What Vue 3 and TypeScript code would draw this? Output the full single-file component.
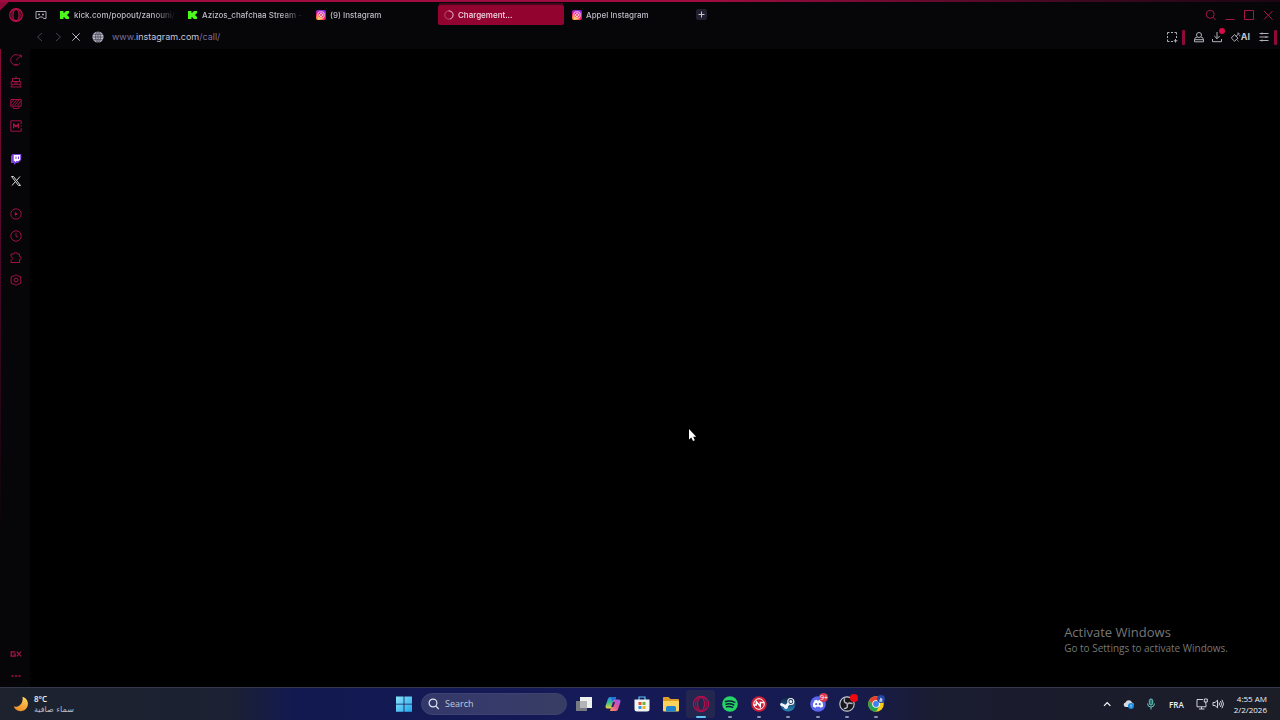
<script setup lang="ts">
import { nextTick, ref } from 'vue'

interface Tab {
  id: number
  title: string
  icon: 'kick' | 'instagram' | 'spinner'
}

const tabs: Tab[] = [
  { id: 1, title: 'kick.com/popout/zanouni/', icon: 'kick' },
  { id: 2, title: 'Azizos_chafchaa Stream -', icon: 'kick' },
  { id: 3, title: '(9) Instagram', icon: 'instagram' },
  { id: 4, title: 'Chargement...', icon: 'spinner' },
  { id: 5, title: 'Appel Instagram', icon: 'instagram' },
]
const activeTab = ref(4)

const host = ref('instagram.com')
const path = ref('/call/')
const editing = ref(false)
const addressInput = ref<HTMLInputElement | null>(null)
const query = ref('')

async function editAddress() {
  editing.value = true
  await nextTick()
  addressInput.value?.focus()
}
</script>

<template>
  <div class="desktop">
    <svg class="defs" aria-hidden="true">
      <defs>
        <radialGradient id="insta" cx="0.25" cy="1" r="1.1">
          <stop offset="0" stop-color="#ffd34e" />
          <stop offset="0.35" stop-color="#ff5a2c" />
          <stop offset="0.6" stop-color="#ec0f8c" />
          <stop offset="1" stop-color="#7a2cf0" />
        </radialGradient>
        <linearGradient id="winlogo" x1="0" y1="0" x2="1" y2="1">
          <stop offset="0" stop-color="#8be4fb" />
          <stop offset="1" stop-color="#22a7ec" />
        </linearGradient>
        <linearGradient id="moon" x1="0.7" y1="0" x2="0.3" y2="1">
          <stop offset="0" stop-color="#ffd55a" />
          <stop offset="1" stop-color="#f08a24" />
        </linearGradient>
        <linearGradient id="copilotA" x1="0" y1="0" x2="0" y2="1">
          <stop offset="0" stop-color="#2a8af0" />
          <stop offset="0.5" stop-color="#35c48a" />
          <stop offset="1" stop-color="#f2d13c" />
        </linearGradient>
        <linearGradient id="copilotB" x1="1" y1="0" x2="0" y2="1">
          <stop offset="0" stop-color="#8a5cf5" />
          <stop offset="0.5" stop-color="#e0559c" />
          <stop offset="1" stop-color="#ff9a55" />
        </linearGradient>
        <linearGradient id="steam" x1="0" y1="0" x2="0" y2="1">
          <stop offset="0" stop-color="#101a3c" />
          <stop offset="1" stop-color="#2a87b8" />
        </linearGradient>
      </defs>
    </svg>

    <div class="browser">
      <header class="chrome">
        <div class="tabrow">
          <button class="opera" aria-label="Menu">
            <svg viewBox="0 0 16 16" width="16" height="16" fill="none" stroke="#c4104a">
              <circle cx="8" cy="8" r="6.3" stroke-width="1.2" />
              <ellipse cx="8" cy="8" rx="3.1" ry="5.6" stroke-width="1.1" />
              <path d="M5.6 2.4C3 5 3 11 5.6 13.6M10.4 2.4C13 5 13 11 10.4 13.6" stroke-width=".7" />
            </svg>
          </button>
          <button class="corner" aria-label="GX Corner">
            <svg viewBox="0 0 12 12" width="12" height="12" fill="none" stroke="#a9a9b4">
              <path d="M1 2.500h10v7H8.500L7.500 8h-3L3.500 9.500H1z" />
              <path d="M3 5.500h2M7 5.500h2" stroke-width="1.400" />
            </svg>
          </button>
          <nav class="tabs" role="tablist" aria-label="Tabs">
            <button
              v-for="tab in tabs"
              :key="tab.id"
              class="tab"
              :class="{ active: tab.id === activeTab }"
              role="tab"
              :aria-selected="tab.id === activeTab"
              @click="activeTab = tab.id"
            >
              <svg v-if="tab.icon === 'kick'" viewBox="0 0 10 10" width="10" height="10">
                <path fill="#4dfb1a" d="M0 1h3.500v2h1V2h1V1H9v2.500H8v1H7v1h1v1h1V9H5.500V8h-1V7h-1v2H0z" />
              </svg>
              <svg v-else-if="tab.icon === 'instagram'" viewBox="0 0 10 10" width="10" height="10">
                <rect width="10" height="10" rx="2" fill="url(#insta)" />
                <g fill="none" stroke="#fff" stroke-width=".8">
                  <rect x="1.900" y="1.900" width="6.200" height="6.200" rx="1.800" />
                  <circle cx="5" cy="5" r="1.500" />
                </g>
                <circle cx="6.900" cy="3.200" r=".4" fill="#fff" />
              </svg>
              <svg v-else viewBox="0 0 10 10" width="10" height="10" fill="none">
                <circle cx="5" cy="5" r="4.200" stroke="#b84a6d" />
                <path d="M5 .8a4.200 4.200 0 0 1 1.500 8.100" stroke="#dba0b4" stroke-linecap="round" />
              </svg>
              <span class="title">{{ tab.title }}</span>
            </button>
          </nav>
          <button class="newtab" aria-label="New tab">
            <svg viewBox="0 0 11 11" width="11" height="11">
              <rect width="11" height="11" rx="2" fill="#211f30" />
              <path d="M5.500 2.500v6M2.500 5.500h6" stroke="#c6c6d0" />
            </svg>
          </button>
          <div class="window">
            <button aria-label="Search tabs">
              <svg viewBox="0 0 12 12" width="12" height="12"><circle cx="5.200" cy="5.300" r="4" /><path d="M8 8.200l2.500 2.700" /></svg>
            </button>
            <button aria-label="Minimize">
              <svg viewBox="0 0 12 12" width="12" height="12"><path d="M1.500 10.500h9" /></svg>
            </button>
            <button aria-label="Maximize">
              <svg viewBox="0 0 12 12" width="12" height="12"><path d="M1.500 1.500h9v9h-9z" /></svg>
            </button>
            <button aria-label="Close">
              <svg viewBox="0 0 12 12" width="12" height="12"><path d="M2 2l8.500 8.500M10.500 2L2 10.500" /></svg>
            </button>
          </div>
        </div>

        <div class="toolbar">
          <button class="nav dim" aria-label="Back">
            <svg viewBox="0 0 10 10" width="10" height="10"><path d="M7 1L2.500 5 7 9" /></svg>
          </button>
          <button class="nav dim" aria-label="Forward">
            <svg viewBox="0 0 10 10" width="10" height="10"><path d="M3 1l4.500 4L3 9" /></svg>
          </button>
          <button class="nav" aria-label="Stop">
            <svg viewBox="0 0 10 10" width="10" height="10"><path d="M1.300 1.300l7.400 7.400M8.700 1.300L1.300 8.700" /></svg>
          </button>
          <button class="globe" aria-label="Site information">
            <svg viewBox="0 0 12 12" width="12" height="12">
              <circle cx="6" cy="6" r="5.600" fill="#b9b9ca" />
              <g fill="none" stroke="#2b2a38" stroke-width=".6">
                <ellipse cx="6" cy="6" rx="2.400" ry="5.600" />
                <path d="M6 .4v11.200M.4 6h11.200M1.200 3.300h9.600M1.200 8.700h9.600" />
              </g>
            </svg>
          </button>
          <input
            v-if="editing"
            ref="addressInput"
            class="address"
            aria-label="Address"
            :value="'www.' + host + path"
            @blur="editing = false"
          />
          <button v-else class="address" aria-label="Edit address" @click="editAddress">
            www.<b>{{ host }}</b>{{ path }}
          </button>
          <div class="actions">
            <button aria-label="Snapshot">
              <svg viewBox="0 0 12 12" width="12" height="12">
                <path d="M1.500 3.500v-2h2M5 1.500h2M8.500 1.500h2v2M10.500 5v2M1.500 5v2M1.500 8.500v2h2M5 10.500h2M9.500 8v3.500M7.800 9.800h3.600" />
              </svg>
            </button>
            <i class="bar"></i>
            <button aria-label="Profile">
              <svg viewBox="0 0 12 12" width="12" height="12">
                <circle cx="6" cy="4" r="2.500" /><path d="M3.800 6.500H2.500l-1 2v2.300h9V8.500l-1-2H8.200M1.500 8.700h9" />
              </svg>
            </button>
            <button class="download" aria-label="Downloads">
              <svg viewBox="0 0 12 12" width="12" height="12">
                <path d="M6 1v6.500M3.300 5L6 7.700 8.700 5M1.500 8v2.700h9V8" />
              </svg>
              <i class="dot"></i>
            </button>
            <button class="ai" aria-label="AI">
              <svg viewBox="0 0 11 12" width="11" height="12">
                <path d="M4.500 3.500l3.500 3.700-3.500 3L1.300 7zM6 5.500L9.500 2M8 1.500v2M9.800 3.800v1.500M7.500 9.500l1 .8" />
              </svg>
              <span>AI</span>
            </button>
            <button class="settings" aria-label="Easy setup">
              <svg viewBox="0 0 12 12" width="12" height="12">
                <path d="M1.500 2.500h9M1.500 6h9M1.500 9.500h9M4 1.500v2M8 5v2M4 8.500v2" />
              </svg>
            </button>
            <i class="bar"></i>
          </div>
        </div>
      </header>

      <div class="body">
        <aside class="sidebar">
          <div class="group">
            <button aria-label="Speed Dial">
              <svg viewBox="0 0 12 12" width="12" height="12"><path d="M8 1.100A5.200 5.200 0 1 0 10 9.300M6 6.200L11 1.500M8.500 1.200h2.800v2.500M4.500 10.900l1.500-.8 1.500.8" /></svg>
            </button>
            <button aria-label="GX Cleaner">
              <svg viewBox="0 0 12 12" width="12" height="12"><path d="M6 .3v2.200M2.500 5.500v-3h7v3M1.200 5.500h9.600v2.800H1.200zM2.500 8.500L.8 11h10.400L9.500 8.500M4 6.900h4" /></svg>
            </button>
            <button aria-label="Wallpaper">
              <svg viewBox="0 0 12 12" width="12" height="12"><path d="M.8 1.500h10.400v6.700H.8zM2 7.500l5-6M4.500 7.500l5-6M7.500 7.500l3-4M1 5l3-3.500M2.500 8.500l1 2h5l1-2" /></svg>
            </button>
            <button aria-label="Mods">
              <svg viewBox="0 0 12 12" width="12" height="12"><path d="M11.200 4V.8H.8v10.400h10.400V8M11.200 5.300v1.400" /><path d="M3.700 8.200V4.200L6 6.500l2.300-2.300v4" stroke-width="1.300" /></svg>
            </button>
          </div>
          <div class="group">
            <button aria-label="Twitch">
              <svg class="solid" viewBox="0 0 12 12" width="12" height="12">
                <path fill="#8040e0" d="M2.500 1h8.700v6L8 10H6l-2 2v-2H1V3z" />
                <path fill="#fff" d="M3.800 2h6.400v4.600L8.500 8h-2L5 9.300V8H3.800z" />
                <path fill="#8040e0" d="M5.500 3.500h1v2.600h-1zM8 3.500h1v2.600H8z" />
              </svg>
            </button>
            <button aria-label="X">
              <svg class="solid" viewBox="0 0 12 12" width="12" height="12">
                <path fill="none" stroke="#d6d6d6" stroke-width="1" d="M1.500 1.500h2l7 9h-2z" />
                <path stroke="#d6d6d6" d="M10 1.500L6.700 5.300M5.200 6.800L2 10.500" />
              </svg>
            </button>
          </div>
          <div class="group">
            <button aria-label="Player">
              <svg viewBox="0 0 12 12" width="12" height="12"><circle cx="6" cy="6" r="5.200" /><path d="M5.200 4.800v2.400L7.200 6z" fill="#c91450" /></svg>
            </button>
            <button aria-label="History">
              <svg viewBox="0 0 12 12" width="12" height="12"><circle cx="6" cy="6" r="5.200" /><path d="M6 2.800v3.500l2 .7" /></svg>
            </button>
            <button aria-label="Extensions">
              <svg viewBox="0 0 12 12" width="12" height="12"><path d="M1 2h3a1.600 1.600 0 0 1 3.200 0h2.300v2.500a1.600 1.600 0 0 1 0 3.200v2.800H1V8.500l2-2.200L1 4.500z" /></svg>
            </button>
            <button aria-label="Settings">
              <svg viewBox="0 0 12 12" width="12" height="12"><path d="M4.300 1.800L6 .7l1.700 1.100 2.900.7v3L11 6l-.4 3.500-2.900.8L6 11.300l-1.700-1-2.900-.8L1 6l.4-3.500z" /><circle cx="6" cy="6" r="2" /></svg>
            </button>
          </div>
          <div class="group end">
            <button aria-label="GX Control">
              <svg viewBox="0 0 12 12" width="12" height="12"><path d="M5.300 3.800H1.200v4.400h4V6H3.500M6.800 3.700l4.200 4.600M11 3.700L6.800 8.300" stroke-width="1.200" /></svg>
            </button>
            <button aria-label="More">
              <svg viewBox="0 0 12 12" width="12" height="12"><path d="M1.500 6h2M5 6h2M8.500 6h2" stroke-width="1.500" /></svg>
            </button>
          </div>
        </aside>
        <main class="page">
          <svg class="cursor" viewBox="0 0 9 14" width="9" height="14" aria-hidden="true">
            <path fill="#fff" d="M1 1v10.500l2.300-2L5 13l1.800-.8L5.200 8.800h3z" />
          </svg>
          <div class="activate">
            <p class="big">Activate Windows</p>
            <p>Go to Settings to activate Windows.</p>
          </div>
        </main>
      </div>
    </div>

    <footer class="taskbar">
      <button class="weather">
        <svg viewBox="0 0 16 16" width="16" height="16">
          <path fill="url(#moon)" d="M9.500.8A7.300 7.300 0 1 1 .8 10.500C6 11.500 10.500 7.500 9.500.8z" />
        </svg>
        <span class="lines">
          <span class="temp">8°C</span>
          <span class="sky" lang="ar" dir="rtl">سماء صافية</span>
        </span>
      </button>

      <div class="dock">
        <button class="start" aria-label="Start">
          <svg viewBox="0 0 16 16" width="16" height="16" fill="url(#winlogo)">
            <path d="M0 .5h7.600v7.300H0zM8.400.5H16v7.300H8.400zM0 8.500h7.600v7.300H0zM8.400 8.500H16v7.300H8.400z" />
          </svg>
        </button>
        <label class="search">
          <svg viewBox="0 0 12 12" width="12" height="12" fill="none" stroke="#e2e4f0" stroke-width="1.200">
            <circle cx="5" cy="5" r="3.900" /><path d="M7.800 8l3 3.200" />
          </svg>
          <input v-model="query" type="text" placeholder="Search" aria-label="Search" />
        </label>
        <div class="apps">
          <button aria-label="Task view">
            <svg viewBox="0 0 18 18" width="18" height="18">
              <rect x="5" y="2" width="12" height="11" fill="#eef0ee" />
              <rect x="1" y="6" width="11" height="10" fill="#777983" />
              <rect x="5" y="6" width="7" height="7" fill="#b2b4b8" />
            </svg>
          </button>
          <button aria-label="Copilot">
            <svg viewBox="0 0 18 18" width="18" height="18">
              <path fill="url(#copilotA)" d="M6 2h6L8.500 13.500H3.200C1.500 13.500 1.200 12 1.700 10.500L4 3.800Q4.700 2 6 2z" />
              <path fill="url(#copilotB)" d="M12 16H6L9.500 4.500h5.300c1.700 0 2 1.500 1.500 3L14 14.200Q13.300 16 12 16z" />
              <path fill="#1c2365" d="M9 7h2l-1.700 5h-2z" />
              <path fill="#1e73d8" d="M6.500 2h4.200q1.200 0 1.700 2.500H9.500L8.800 7z" />
            </svg>
          </button>
          <button aria-label="Microsoft Store">
            <svg viewBox="0 0 18 18" width="18" height="18">
              <path fill="none" stroke="#5fc3ef" stroke-width="1.200" d="M6 5V2h6v3" />
              <path fill="#f1f3f5" d="M1.500 4.500h15v9.500a2.500 2.500 0 0 1-2.500 2.500H4A2.500 2.500 0 0 1 1.500 14z" />
              <path fill="#ee4b2b" d="M5.500 7h3v3h-3z" /><path fill="#6fb52c" d="M9.500 7h3v3h-3z" />
              <path fill="#2498e3" d="M5.500 11h3v3h-3z" /><path fill="#f5b61d" d="M9.500 11h3v3h-3z" />
            </svg>
          </button>
          <button aria-label="File Explorer">
            <svg viewBox="0 0 18 18" width="18" height="18">
              <path fill="#dc9e26" d="M1 3q0-1 1-1h4.500l2 2H16q1 0 1 1v9H1z" />
              <path fill="#fbd25c" d="M1 6h16v9.500q0 1-1 1H2q-1 0-1-1z" />
              <path fill="#1e83cf" d="M4 16.500v-4q0-1.500 1.500-1.500h7q1.500 0 1.500 1.500v4z" />
            </svg>
          </button>
          <button class="running current" aria-label="Opera GX">
            <svg viewBox="0 0 18 18" width="18" height="18" fill="none" stroke="#b80d4c">
              <circle cx="9" cy="9" r="7.600" stroke-width="1.200" />
              <ellipse cx="9" cy="9" rx="3.500" ry="6.800" stroke-width="1.200" />
              <path d="M6 2.700C2.800 5.500 2.800 12.500 6 15.300M12 2.700c3.200 2.800 3.200 9.800 0 12.600" stroke-width=".8" />
            </svg>
          </button>
          <button class="running" aria-label="Spotify">
            <svg viewBox="0 0 18 18" width="18" height="18">
              <circle cx="9" cy="9" r="7.800" fill="#25d366" />
              <path fill="none" stroke="#0c2036" stroke-linecap="round" stroke-width="1.500" d="M4.500 6.500q5-1.300 9.300.8M5 9.200q4.300-1 7.800.8M5.500 11.700q3.500-.8 6.200.7" />
            </svg>
          </button>
          <button class="running" aria-label="NZXT">
            <svg viewBox="0 0 18 18" width="18" height="18">
              <circle cx="9" cy="9" r="7.800" fill="#d11f36" />
              <g fill="none" stroke="#fff">
                <circle cx="9" cy="9" r="5.300" />
                <path d="M3.500 10h2.800V6.500l4 5V7.500h4" stroke-width="1.400" />
              </g>
            </svg>
          </button>
          <button class="running" aria-label="Steam">
            <svg viewBox="0 0 18 18" width="18" height="18">
              <circle cx="9" cy="9" r="7.600" fill="url(#steam)" />
              <path stroke="#f2f5fa" stroke-width="2.800" stroke-linecap="round" d="M2.500 9.500L7 11.500l4-4.500" fill="none" />
              <circle cx="11.800" cy="6.500" r="3" fill="#182a50" stroke="#f2f5fa" stroke-width="1.200" />
              <circle cx="11.800" cy="6.500" r="1.500" fill="#f2f5fa" />
              <circle cx="7" cy="12" r="2" fill="#f2f5fa" />
            </svg>
          </button>
          <button class="running" aria-label="Discord">
            <svg viewBox="0 0 18 18" width="18" height="18">
              <circle cx="9" cy="9" r="7.800" fill="#5b67ee" />
              <path fill="#fff" d="M5.500 5.500q1.200-.7 2.200-.7l.3.700h2l.3-.7q1 0 2.200.7 1.800 3 1.600 6-1.300 1.100-2.600 1.300l-.7-1.100H7.200l-.7 1.100q-1.300-.2-2.600-1.300-.2-3 1.600-6z" />
              <circle cx="7.200" cy="9.200" r="1.100" fill="#5b67ee" /><circle cx="10.800" cy="9.200" r="1.100" fill="#5b67ee" />
            </svg>
            <span class="badge">9+</span>
          </button>
          <button class="running" aria-label="OBS Studio">
            <svg viewBox="0 0 18 18" width="18" height="18">
              <circle cx="9" cy="9" r="7.200" fill="#c9cad0" stroke="#c9cad0" stroke-width="1.100" />
              <circle cx="9" cy="9" r="6.600" fill="#17171d" />
              <g fill="none" stroke="#b9bac2" stroke-width="1.400" stroke-linecap="round">
                <path d="M6.500 4Q5.500 8 9 8.300" />
                <path d="M14 8.500Q10.500 7 9.500 9.500" />
                <path d="M6.500 13.500Q10.500 13 9 9.800" />
              </g>
            </svg>
            <i class="rec"></i>
          </button>
          <button class="running" aria-label="Chrome">
            <svg viewBox="0 0 18 18" width="18" height="18">
              <circle cx="9" cy="9" r="7.800" fill="#fbc916" />
              <path fill="#e8412f" d="M2.250 5.100A7.800 7.800 0 0 1 15.750 5.100L9 5.300 5.800 10.800z" />
              <path fill="#23a455" d="M2.250 5.100A7.800 7.800 0 0 0 9 16.800L12.200 11 5.800 10.800z" />
              <circle cx="9" cy="9" r="3.800" fill="#fff" /><circle cx="9" cy="9" r="2.900" fill="#3b82f0" />
              <circle cx="14" cy="4" r="3.900" fill="#2447a8" />
              <path d="M12 6.500l1.500-4 2 1.500-.5 3z" fill="#b9c6e6" />
            </svg>
          </button>
        </div>
      </div>

      <div class="tray">
        <button aria-label="Show hidden icons">
          <svg viewBox="0 0 12 12" width="12" height="12" fill="none" stroke="#fff" stroke-width="1.200"><path d="M3 7.800l3.200-3.300 3.200 3.300" /></svg>
        </button>
        <button aria-label="OneDrive">
          <svg viewBox="0 0 12 12" width="12" height="12">
            <path fill="#d6dbe2" d="M2.500 9a2.300 2.300 0 0 1 0-4.500 3.500 3.500 0 0 1 6.500 0A2.300 2.300 0 0 1 9 9z" />
            <circle cx="8" cy="8" r="3" fill="#1489dc" /><path d="M8 6.500v3" stroke="#d9efff" stroke-width=".8" />
          </svg>
        </button>
        <button aria-label="Microphone">
          <svg viewBox="0 0 12 12" width="12" height="12" fill="none" stroke="#6cc4bf">
            <rect x="4.300" y="1" width="3.400" height="6" rx="1.700" fill="#2c706f" /><path d="M2.500 5.500a3.500 3.500 0 0 0 7 0M6 9v2.500" />
          </svg>
        </button>
        <button class="lang">FRA</button>
        <button class="net" aria-label="Network and volume">
          <svg viewBox="0 0 12 12" width="12" height="12" fill="none" stroke="#e4e6ec" stroke-width=".9">
            <path d="M7 1.500H1v7.300h9V6.500M3 11h5.500M5.500 9v2M8.300 1h3v3h-3zM9.800 4v2.500" />
          </svg>
          <svg viewBox="0 0 12 12" width="12" height="12" fill="none" stroke="#e4e6ec" stroke-width=".9">
            <path d="M1 4.500h2l2.500-2.300v7.600L3 7.500H1zM7 4.500q1 1.500 0 3M8.500 3q2 3 0 6M10 1.800q3 4.200 0 8.400" />
          </svg>
        </button>
        <button class="clock">
          <span>4:55 AM</span>
          <span>2/2/2026</span>
        </button>
      </div>
    </footer>
  </div>
</template>

<style>
body {
  background: #000;
}
</style>

<style scoped>
.desktop {
  display: flex;
  flex-direction: column;
  min-height: 100vh;
  background: #000;
  font-family: Inter, 'Liberation Sans', sans-serif;
}
.defs {
  position: absolute;
  width: 0;
  height: 0;
}
button,
input {
  border: 0;
  padding: 0;
  margin: 0;
  background: none;
  color: inherit;
  font: inherit;
}
button {
  display: flex;
  align-items: center;
  justify-content: center;
}
svg {
  display: block;
  flex: none;
}
.browser {
  flex: 1;
  display: flex;
  flex-direction: column;
  background: linear-gradient(135deg, #8e0a38 7px, #060609 8px);
}
.chrome {
  display: flex;
  flex-direction: column;
  height: 49px;
  box-sizing: border-box;
  border-top: 2px solid;
  border-image: linear-gradient(90deg, #a00c40, #a00c40 55%, #3c0820 85%, #1c0612) 1;
}
.tabrow {
  display: flex;
  align-items: center;
  height: 25px;
  padding: 0 6px 0 8px;
}
.opera {
  width: 16px;
}
.corner {
  width: 30px;
  padding-left: 3px;
}
.tabs {
  display: flex;
  gap: 2px;
  height: 20px;
}
.tab {
  width: 126px;
  padding: 0 4px 0 6px;
  gap: 4px;
  justify-content: flex-start;
  border-radius: 2px;
  color: #bcbcc5;
  font-size: 8px;
  font-weight: 500;
  line-height: 12px;
}
.tab.active {
  background: #93032f;
  color: #f3dbe3;
  box-shadow: 0 -3px 0 -1px #45061e;
}
.title {
  flex: 1;
  overflow: hidden;
  white-space: nowrap;
  text-align: left;
  mask-image: linear-gradient(90deg, #000 78%, transparent);
}
.newtab {
  margin-left: 4px;
  width: 11px;
}
.window {
  display: flex;
  margin-left: auto;
  gap: 7px;
}
.window svg {
  fill: none;
  stroke: #a81443;
}
.toolbar {
  display: flex;
  align-items: center;
  height: 20px;
  padding-left: 31px;
}
.nav {
  width: 18px;
}
.nav svg {
  fill: none;
  stroke: #b6b6c2;
}
.nav.dim svg {
  stroke: #45454e;
}
.globe {
  width: 25px;
}
.address {
  flex: 1;
  margin-left: 2px;
  justify-content: flex-start;
  color: #77719f;
  font-size: 9px;
  line-height: 14px;
}
.address b {
  color: #c6c5d6;
  font-weight: 400;
}
.actions {
  display: flex;
  align-items: center;
  padding-right: 3px;
}
.actions svg {
  fill: none;
  stroke: #b0b0ba;
}
.bar {
  width: 3px;
  height: 15px;
  margin: 0 8px 0 4px;
  border-radius: 1px;
  background: #8f0a38;
}
.bar:last-child {
  margin: 0 0 0 4px;
}
.download {
  position: relative;
  margin: 0 7px 0 6px;
}
.dot {
  position: absolute;
  top: -3px;
  right: -2px;
  width: 6px;
  height: 6px;
  border-radius: 50%;
  background: #d80d48;
}
.ai {
  color: #c2c2cb;
  font-size: 9px;
  line-height: 12px;
  font-weight: 700;
}
.settings {
  margin-left: 8px;
}
.body {
  flex: 1;
  display: flex;
}
.sidebar {
  display: flex;
  flex-direction: column;
  gap: 11px;
  width: 30px;
  box-sizing: border-box;
  border-left: 1px solid;
  border-image: linear-gradient(#8a0a38, #50082a 30%, #0a0508 75%) 1;
}
.group button {
  width: 30px;
  height: 22px;
}
.group.end {
  margin-top: auto;
}
.group svg:not(.solid) {
  fill: none;
  stroke: #b0124a;
  stroke-width: 0.9;
}
.page {
  flex: 1;
  position: relative;
  display: flex;
  background: #000;
}
.cursor {
  position: absolute;
  left: 52.6%;
  top: 59.4%;
}
.activate {
  margin: auto 52px 32px auto;
  color: #777;
  font-family: 'Open Sans', 'Noto Sans', sans-serif;
  font-size: 10px;
  line-height: 14px;
}
.activate p {
  margin: 0;
}
.activate .big {
  font-size: 13px;
  line-height: 18px;
}
.taskbar {
  display: grid;
  grid-template-columns: 1fr auto 1fr;
  align-items: center;
  height: 33px;
  box-sizing: border-box;
  border-top: 1px solid #35384a;
  background: linear-gradient(90deg, #1d222e 0, #1c2133 18%, #121950 23%, #151a58 45%, #161b50 66%, #1a1c30 73%, #1b1d27 100%);
  color: #f0f1f5;
  font-family: 'Open Sans', 'Noto Sans', sans-serif;
  font-size: 8px;
  line-height: 11px;
}
.weather {
  justify-self: start;
  gap: 5px;
  padding-left: 13px;
}
.lines {
  display: flex;
  flex-direction: column;
  align-items: flex-start;
}
.temp,
.lang {
  font-weight: 600;
}
.clock {
  font-weight: 500;
}
.sky {
  color: #b9bdc8;
  font-family: 'DejaVu Sans', sans-serif;
}
.dock {
  display: flex;
  align-items: center;
  gap: 2px;
}
.start {
  width: 30px;
}
.search {
  display: flex;
  align-items: center;
  gap: 5px;
  width: 146px;
  height: 22px;
  box-sizing: border-box;
  padding: 0 6px;
  border-radius: 11px;
  background: linear-gradient(90deg, #33386a, #363b6b 50%, #373d62);
  border: 1px solid #3d4270;
}
.search input {
  flex: 1;
  min-width: 0;
  outline: none;
  font-size: 9px;
  line-height: 14px;
}
.search input::placeholder {
  color: #c5c8d8;
  opacity: 1;
}
.apps {
  display: flex;
  width: 322px;
}
.apps button {
  flex: 1;
  height: 28px;
  position: relative;
  border-radius: 3px;
}
.running::after {
  content: '';
  position: absolute;
  bottom: 0;
  left: calc(50% - 2px);
  width: 4px;
  height: 2px;
  border-radius: 1px;
  background: #8d93a8;
}
.apps .current {
  background: #232750;
}
.current::after {
  left: calc(50% - 5px);
  width: 10px;
  background: #62c4f4;
}
.badge {
  position: absolute;
  top: 3px;
  right: 4px;
  width: 9px;
  height: 9px;
  border-radius: 50%;
  background: #d83a4c;
  color: #fff;
  font-size: 7px;
  line-height: 9px;
  text-align: center;
}
.rec {
  position: absolute;
  top: 4px;
  right: 4px;
  width: 8px;
  height: 8px;
  border-radius: 50%;
  background: #f00710;
}
.tray {
  justify-self: end;
  display: flex;
  align-items: center;
  gap: 10px;
  padding-right: 13px;
}
.lang {
  padding: 0 2px;
}
.net {
  gap: 4px;
}
.clock {
  flex-direction: column;
  align-items: flex-end;
}
</style>
